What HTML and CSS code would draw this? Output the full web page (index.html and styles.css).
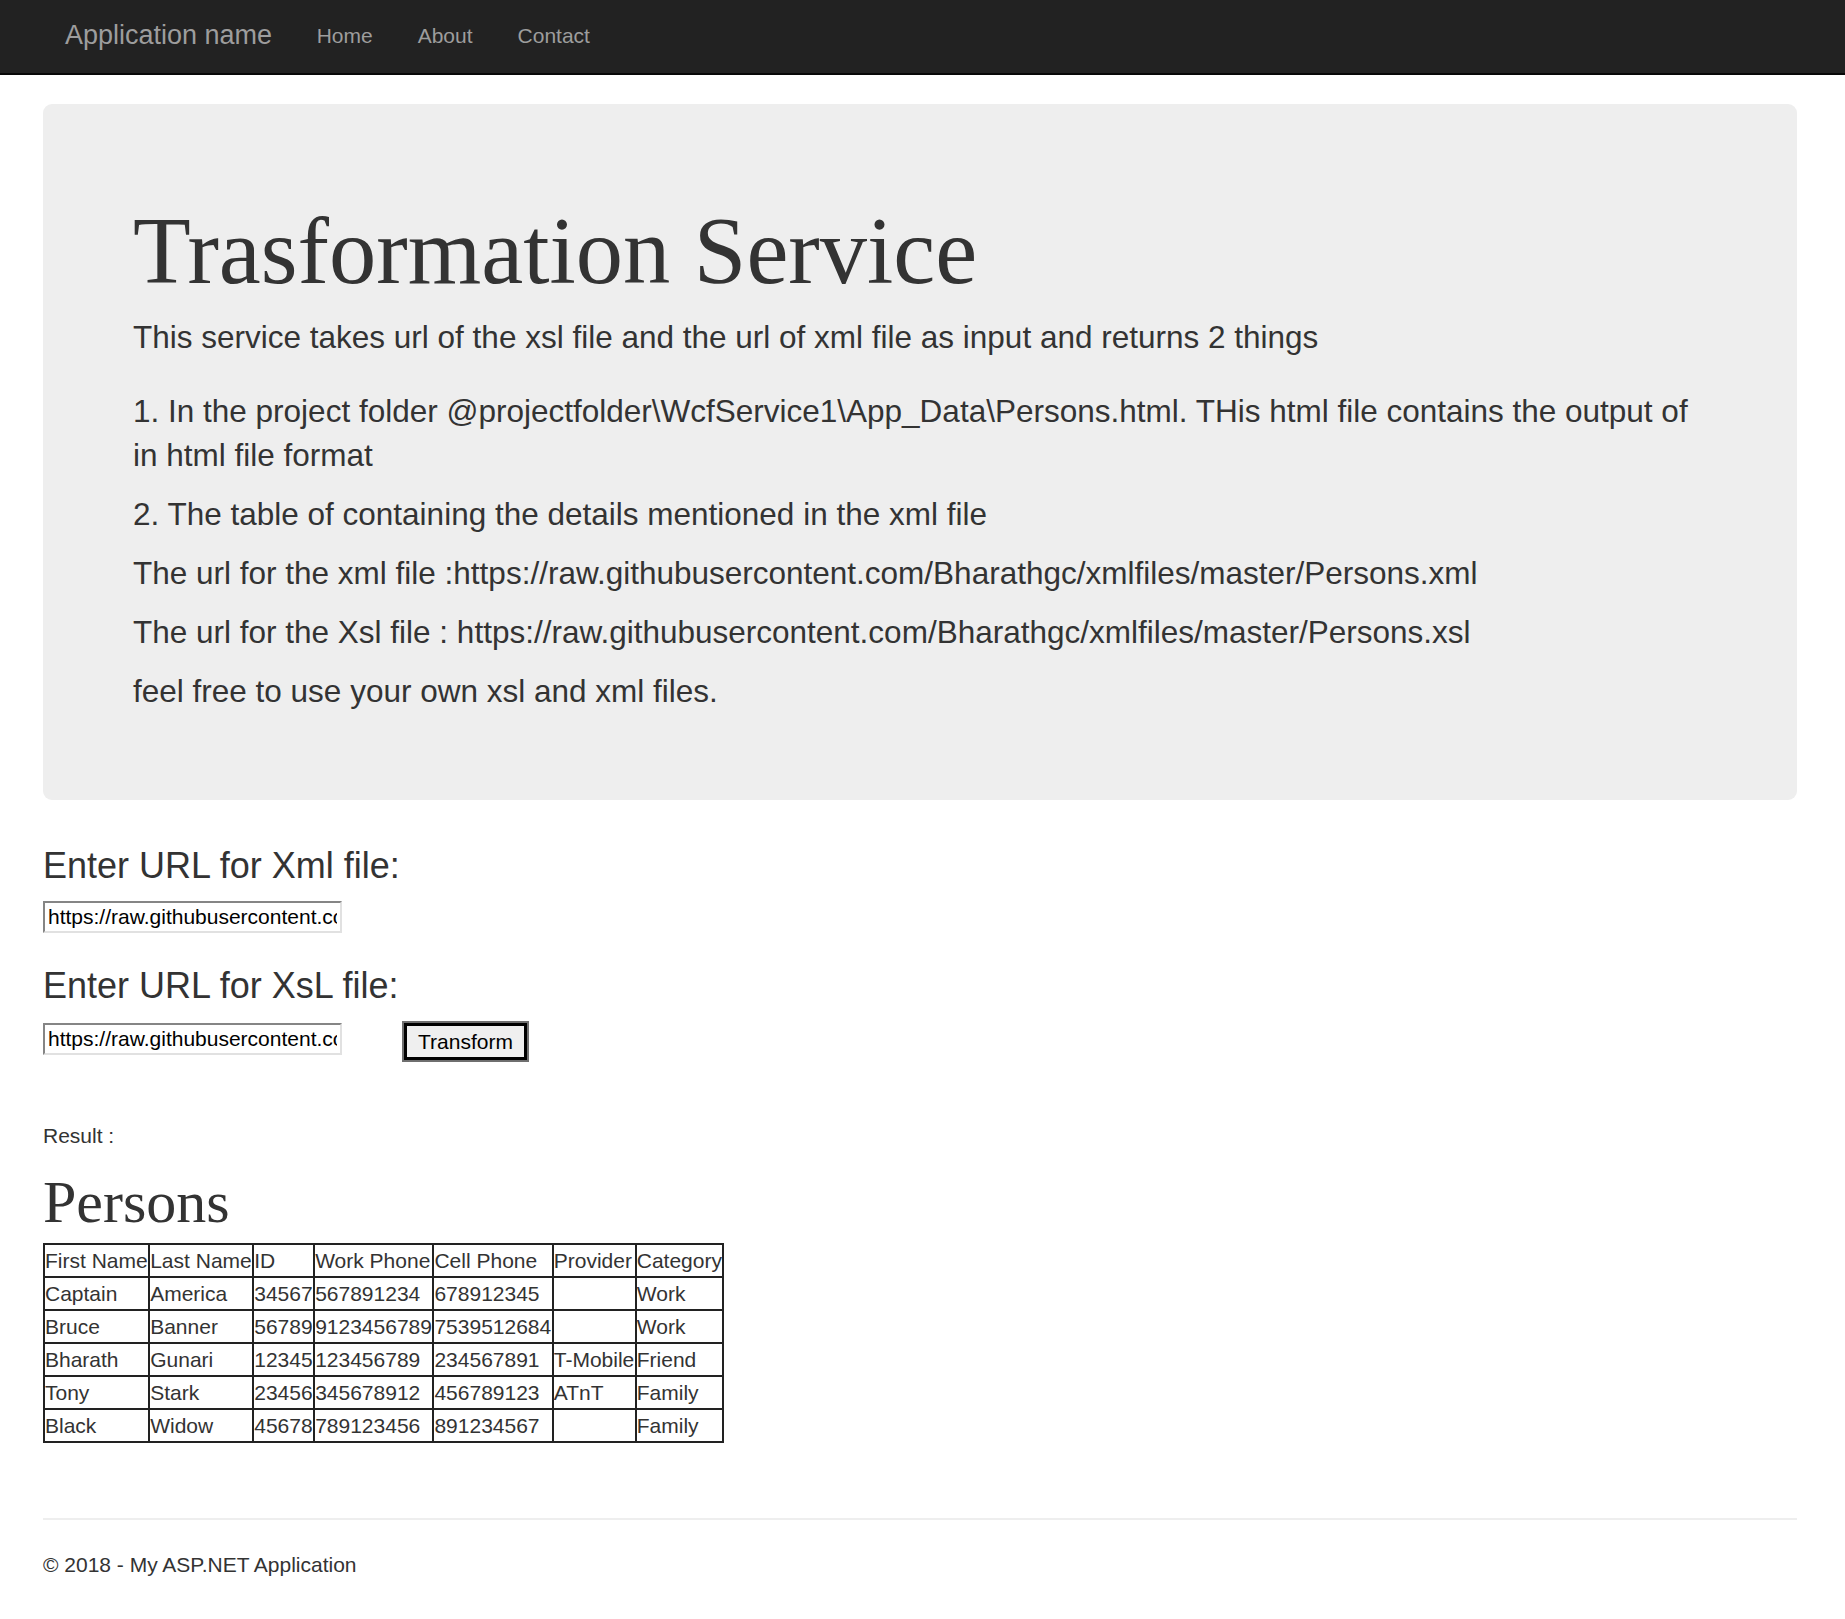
FILE: index.html
```html
<!DOCTYPE html>
<html lang="en">
<head>
<meta charset="utf-8">
<title>Trasformation Service</title>
<link rel="stylesheet" href="styles.css">
</head>
<body>
<nav class="navbar">
  <div class="nav-inner">
    <a class="brand" href="#">Application name</a>
    <ul class="nav-links">
      <li><a href="#">Home</a></li>
      <li><a href="#">About</a></li>
      <li><a href="#">Contact</a></li>
    </ul>
  </div>
</nav>
<main class="container">
  <section class="jumbotron">
    <h1 class="title">Trasformation Service</h1>
    <p class="intro">This service takes url of the xsl file and the url of xml file as input and returns 2 things</p>
    <p>1. In the project folder @projectfolder\WcfService1\App_Data\Persons.html. THis html file contains the output of in html file format</p>
    <p>2. The table of containing the details mentioned in the xml file</p>
    <p>The url for the xml file :https://raw.githubusercontent.com/Bharathgc/xmlfiles/master/Persons.xml</p>
    <p>The url for the Xsl file : https://raw.githubusercontent.com/Bharathgc/xmlfiles/master/Persons.xsl</p>
    <p>feel free to use your own xsl and xml files.</p>
  </section>
  <form class="form">
    <h3 class="label">Enter URL for Xml file:</h3>
    <div class="row">
      <input class="url" type="text" value="https://raw.githubusercontent.com/Bharathgc/xmlfiles/master/Persons.xml">
    </div>
    <h3 class="label second">Enter URL for XsL file:</h3>
    <div class="row">
      <input class="url shifted" type="text" value="https://raw.githubusercontent.com/Bharathgc/xmlfiles/master/Persons.xsl">
      <button class="btn" type="button">Transform</button>
    </div>
  </form>
  <div class="result">
    <p class="result-label">Result :</p>
    <h2 class="persons">Persons</h2>
    <table class="grid">
      <tr><td>First Name</td><td>Last Name</td><td>ID</td><td>Work Phone</td><td>Cell Phone</td><td>Provider</td><td>Category</td></tr>
      <tr><td>Captain</td><td>America</td><td>34567</td><td>567891234</td><td>678912345</td><td></td><td>Work</td></tr>
      <tr><td>Bruce</td><td>Banner</td><td>56789</td><td>9123456789</td><td>7539512684</td><td></td><td>Work</td></tr>
      <tr><td>Bharath</td><td>Gunari</td><td>12345</td><td>123456789</td><td>234567891</td><td>T-Mobile</td><td>Friend</td></tr>
      <tr><td>Tony</td><td>Stark</td><td>23456</td><td>345678912</td><td>456789123</td><td>ATnT</td><td>Family</td></tr>
      <tr><td>Black</td><td>Widow</td><td>45678</td><td>789123456</td><td>891234567</td><td></td><td>Family</td></tr>
    </table>
  </div>
  <hr class="rule">
  <footer class="footer">
    <p>&copy; 2018 - My ASP.NET Application</p>
  </footer>
</main>
</body>
</html>
```

FILE: styles.css
```css
* { box-sizing: border-box; }
html, body { margin: 0; padding: 0; }
body {
  font-family: "Liberation Sans", Arial, Helvetica, sans-serif;
  font-size: 21px;
  line-height: 30px;
  color: #333;
  background: #fff;
}
a { text-decoration: none; }

.navbar {
  height: 75px;
  background: #222;
  border-bottom: 2px solid #080808;
}
.nav-inner {
  display: flex;
  align-items: flex-start;
  padding-left: 43px;
}
.brand {
  display: block;
  padding: 20px 22px 0 22px;
  height: 73px;
  font-size: 27px;
  line-height: 30px;
  color: #9d9d9d;
}
.nav-links {
  display: flex;
  list-style: none;
  margin: 0;
  padding: 0;
}
.nav-links a {
  display: block;
  padding: 21px 22.5px 0 22.5px;
  line-height: 30px;
  font-size: 21px;
  color: #9d9d9d;
}

.container {
  width: 1754px;
  margin-left: 43px;
  padding-top: 29px;
}

.jumbotron {
  background: #eee;
  border-radius: 9px;
  padding: 72px 90px;
  margin-bottom: 46px;
}
.title {
  font-family: "Liberation Serif", "Times New Roman", serif;
  font-weight: normal;
  font-size: 94.5px;
  line-height: 104px;
  margin: 23px 0 12px 0;
  color: #333;
}
.jumbotron p {
  font-size: 31.5px;
  line-height: 44px;
  margin: 0 0 15px 0;
}
.jumbotron p.intro { margin-bottom: 30px; }

.form { margin: 0; }
.label {
  font-size: 36px;
  line-height: 40px;
  font-weight: normal;
  margin: 0 0 15px 0;
  color: #333;
}
.label.second { margin-top: 33px; }
.row {
  display: flex;
  align-items: flex-start;
  gap: 60px;
}
.url {
  width: 299px;
  height: 32px;
  margin: 0;
  padding: 0 3px;
  font-family: "Liberation Sans", Arial, sans-serif;
  font-size: 21px;
  color: #000;
  background: #fff;
  border-style: solid;
  border-width: 2px;
  border-color: #858585 #e1e1e1 #e1e1e1 #858585;
  outline: none;
}
.url.shifted { margin-top: 2px; }
.btn {
  width: 127px;
  height: 41px;
  margin: 0;
  padding: 0;
  font-family: "Liberation Sans", Arial, sans-serif;
  font-size: 21px;
  line-height: 30px;
  color: #000;
  background: #efefef;
  border: 2px solid #6f6f6f;
  box-shadow: inset 0 0 0 3px #000;
}

.result { padding-top: 59px; }
.result-label { margin: 0; }
.persons {
  font-family: "Liberation Serif", "Times New Roman", serif;
  font-weight: normal;
  font-size: 60px;
  line-height: 66px;
  margin: 18px 0 8px 0;
  color: #333;
}
.grid {
  border-collapse: collapse;
  border: 2px solid #222;
}
.grid td {
  border: 2px solid #222;
  padding: 0 0.5px 0 0;
  line-height: 31px;
  height: 31px;
  white-space: nowrap;
  vertical-align: middle;
}

.rule {
  border: 0;
  border-top: 2px solid #eee;
  margin: 75px 0 30px 0;
  height: 0;
}
.footer p { margin: 0; }
```
